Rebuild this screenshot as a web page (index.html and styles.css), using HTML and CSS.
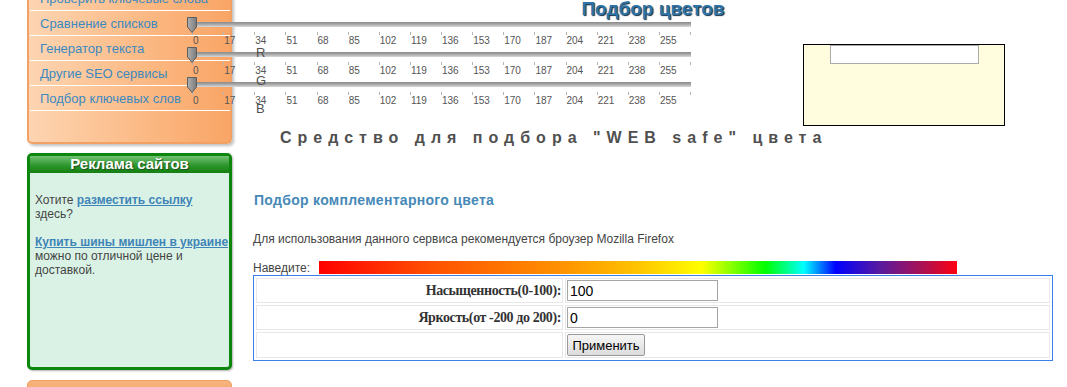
FILE: index.html
```html
<!DOCTYPE html>
<html lang="ru">
<head>
    <meta charset="UTF-8">
    <title>Подбор цветов</title>
    <link rel="stylesheet" href="styles.css">
</head>
<body>

    <div class="page">
        <aside class="sidebar">
            <div class="menu-box">
                <ul class="menu">
                    <li><a href="#">Проверить ключевые слова</a></li>
                    <li><a href="#">Сравнение списков</a></li>
                    <li><a href="#">Генератор текста</a></li>
                    <li><a href="#">Другие SEO сервисы</a></li>
                    <li><a href="#">Подбор ключевых слов</a></li>
                </ul>
            </div>

            <div class="ad-box">
                <div class="ad-head">Реклама сайтов</div>
                <div class="ad-body">
                    Хотите <a href="#">разместить ссылку</a> здесь?<br><br>
                    <a href="#">Купить шины мишлен в украине</a><br>
                    можно по отличной цене и доставкой.
                </div>
            </div>

            <div class="partner-box">
                <div class="partner-head"><span class="square"></span>Партнеры</div>
            </div>
        </aside>

        <main class="main">
            <h1 class="title">Подбор цветов</h1>

            <div class="picker">
                <div class="sliders" id="sliders">
                    <span class="channel ch-r">R</span>
                    <span class="channel ch-g">G</span>
                    <span class="channel ch-b">B</span>
                </div>
                <div class="preview">
                    <div class="preview-field"></div>
                </div>
            </div>

            <h2 class="websafe">Средство для подбора "WEB safe" цвета</h2>

            <h3 class="section-title">Подбор комплементарного цвета</h3>
            <p class="note">Для использования данного сервиса рекомендуется броузер Mozilla Firefox</p>

            <div class="hover-row">
                <span class="hover-label">Наведите:</span>
                <div class="rainbow"></div>
            </div>

            <table class="comp">
                <tr>
                    <td class="label">Насыщенность(0-100):</td>
                    <td><input type="text" class="field" value="100"></td>
                </tr>
                <tr>
                    <td class="label">Яркость(от -200 до 200):</td>
                    <td><input type="text" class="field" value="0"></td>
                </tr>
                <tr>
                    <td class="label"></td>
                    <td><button class="apply">Применить</button></td>
                </tr>
            </table>
        </main>
    </div>

    <script>
        const sliders = document.getElementById('sliders');

        function buildSlider() {
            const slider = document.createElement('div');
            slider.className = 'slider';
            slider.innerHTML =
                '<div class="track"></div>' +
                '<svg class="thumb" width="11" height="16" viewBox="0 0 11 16">' +
                '<defs><linearGradient id="tg" x1="0" y1="0" x2="1" y2="0">' +
                '<stop offset="0" stop-color="#b0b0b0"/><stop offset="1" stop-color="#7a7a7a"/>' +
                '</linearGradient></defs>' +
                '<polygon points="0.5,0.5 9.5,0.5 9.5,10 5,15.5 0.5,10" fill="url(#tg)" stroke="#5e5e5e"/>' +
                '</svg>';

            const scale = document.createElement('div');
            scale.className = 'scale';
            for (let i = 0; i <= 16; i++) {
                const tick = document.createElement('span');
                tick.className = 'tick';
                tick.textContent = i < 16 ? i * 17 : '';
                scale.appendChild(tick);
            }
            slider.appendChild(scale);
            return slider;
        }

        // three sliders: R, G, B
        for (let i = 0; i < 3; i++) {
            sliders.insertBefore(buildSlider(), sliders.firstChild);
        }
    </script>

</body>
</html>
```

FILE: styles.css
```css
body {
    margin: 0;
    padding: 0;
    background: #fff;
    font-family: "Liberation Sans", Arial, sans-serif;
    color: #444;
    overflow: hidden;
}

.page {
    display: flex;
    align-items: flex-start;
    padding-left: 27px;
}

/* Sidebar */
.sidebar {
    width: 205px;
    margin-top: -14px;
    flex-shrink: 0;
}

.menu-box {
    background: linear-gradient(to right, #fdd5b2, #fbb882 60%, #f9a566);
    border: 2px solid #f3a064;
    border-top: none;
    border-radius: 0 0 5px 5px;
    box-shadow: 2px 2px 3px rgba(0, 0, 0, 0.25);
    padding-bottom: 31px;
}

.menu {
    list-style: none;
    margin: 0;
    padding: 0 0 0 1px;
}

.menu li {
    height: 24px;
    line-height: 23px;
    border-bottom: 1px solid #fff;
    padding-left: 10px;
}

.menu a {
    font-size: 13px;
    color: #3b89c1;
    text-decoration: none;
}

.ad-box {
    margin-top: 9px;
    height: 211px;
    border: 3px solid #0c860c;
    border-radius: 5px;
    background: #daf2e6;
    box-shadow: 1px 1px 2px rgba(0, 0, 0, 0.3);
    overflow: hidden;
}

.ad-head {
    height: 17px;
    line-height: 16px;
    text-align: center;
    font-size: 15px;
    font-weight: 700;
    color: #fff;
    text-shadow: 1px 1px 1px #1a4d1a;
    background: linear-gradient(#72c272, #2e962e 55%, #14800f);
}

.ad-body {
    padding: 20px 0 0 5px;
    font-size: 12px;
    line-height: 14px;
    color: #444;
}

.ad-body a {
    color: #3f84b6;
    font-weight: 700;
}

.partner-box {
    margin-top: 10px;
    height: 30px;
    border: 1px solid #f0a062;
    border-radius: 5px 5px 0 0;
    background: linear-gradient(#f6b47e, #f59a55);
}

.partner-head {
    padding-top: 4px;
    text-align: center;
    font-size: 14px;
    font-weight: 700;
    color: #8a8a8a;
}

.square {
    display: inline-block;
    width: 7px;
    height: 7px;
    background: #fff;
    margin-right: 3px;
}

/* Main column */
.main {
    width: 800px;
    margin-left: 21px;
    flex-shrink: 0;
}

.title {
    margin: 0;
    font-size: 19px;
    line-height: 17px;
    font-weight: 700;
    text-align: center;
    color: #2d74a9;
    text-shadow: 1px 1px 1px #0f2c44;
}

.picker {
    display: flex;
    align-items: flex-start;
    height: 109px;
}

.sliders {
    position: relative;
    width: 505px;
    margin-left: -67px;
}

.slider {
    position: relative;
    height: 30px;
    padding-top: 5px;
    box-sizing: border-box;
}

.track {
    margin-left: 4px;
    height: 5px;
    background: linear-gradient(#8a8a8a, #a6a6a6 45%, #dadada);
}

.thumb {
    position: absolute;
    top: 0;
    left: 1px;
}

.scale {
    display: grid;
    grid-template-columns: repeat(16, 31.125px) 1px;
    margin-top: 5px;
    padding-left: 6px;
}

.tick {
    padding-top: 3px;
    padding-left: 1px;
    height: 12px;
    line-height: 12px;
    font-size: 10px;
    color: #555;
    white-space: nowrap;
    background: linear-gradient(#b4b4b4, #b4b4b4) no-repeat 0 0 / 1px 3px;
}

.channel {
    position: absolute;
    left: 70px;
    font-size: 13px;
    line-height: 13px;
    color: #505050;
}

.ch-r { top: 29px; }
.ch-g { top: 57px; }
.ch-b { top: 85px; }

.preview {
    width: 200px;
    height: 80px;
    margin-top: 27px;
    margin-left: 112px;
    border: 1px solid #000;
    background: #fffddd;
}

.preview-field {
    width: 147px;
    height: 17px;
    margin: 0 auto;
    border: 1px solid #aaa;
    background: #fff;
}

.websafe {
    margin: 2px 0 0 27px;
    font-size: 16px;
    line-height: 20px;
    font-weight: 700;
    letter-spacing: 6px;
    color: #505050;
}

.section-title {
    margin: 44px 0 0 1px;
    font-size: 14px;
    line-height: 17px;
    font-weight: 700;
    letter-spacing: 0.3px;
    color: #4689b7;
}

.note {
    margin: 23px 0 0;
    font-size: 12px;
    line-height: 15px;
    color: #444;
}

.hover-row {
    display: flex;
    margin-top: 14px;
}

.hover-label {
    width: 66px;
    font-size: 12px;
    line-height: 14px;
    color: #444;
}

.rainbow {
    width: 638px;
    height: 13px;
    background: linear-gradient(to right,
        #ff0000 0%,
        #ff5200 18%,
        #ff9200 38%,
        #ffc400 50%,
        #ffff00 60%,
        #00ff00 70%,
        #00ffff 76%,
        #0000ff 81%,
        #5a1a9e 88%,
        #b0104e 95%,
        #ff0010 100%);
}

/* Complementary table */
.comp {
    width: 800px;
    border: 1px solid #3a80e6;
    border-spacing: 2px;
}

.comp td {
    border: 1px solid #e8e8e8;
    padding: 1px;
}

.comp .label {
    width: 303px;
    text-align: right;
    font-family: "Liberation Serif", "Times New Roman", serif;
    font-size: 14px;
    font-weight: 700;
    letter-spacing: -0.4px;
    color: #333;
}

.field {
    width: 151px;
    height: 21px;
    box-sizing: border-box;
    border: 1px solid #a5a5a5;
    padding: 1px 2px;
    font-family: "Liberation Sans", Arial, sans-serif;
    font-size: 14px;
    color: #000;
}

.apply {
    width: 78px;
    height: 22px;
    padding: 0;
    font-family: "Liberation Sans", Arial, sans-serif;
    font-size: 13px;
    color: #000;
    border: 1px solid #999;
    border-radius: 2px;
    background: linear-gradient(#f6f6f6, #dcdcdc);
}
```
